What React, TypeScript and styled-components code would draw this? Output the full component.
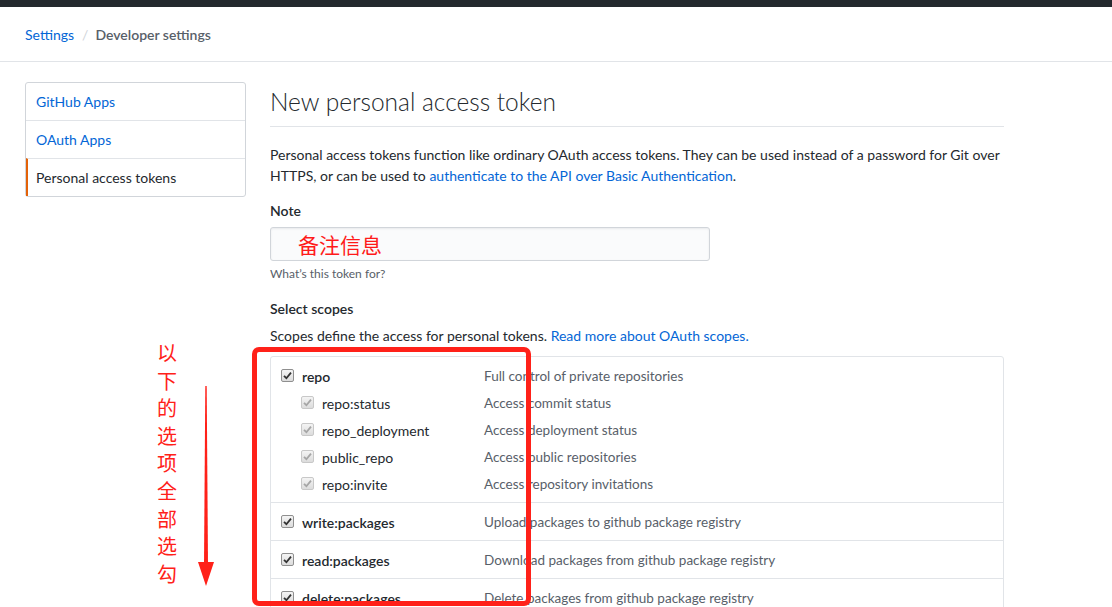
import React from "react";
import styled, { createGlobalStyle } from "styled-components";

const Global = createGlobalStyle`
  html, body { margin: 0; padding: 0; background: #fff; }
  body {
    font-family: "Segoe UI", Lato, "Noto Sans", "Noto Sans CJK SC", sans-serif;
    font-size: 14px;
    line-height: 1.5;
    color: #24292e;
  }
  * { box-sizing: border-box; }
`;

const Page = styled.div`
  position: relative;
  width: 1112px;
  height: 607px;
  overflow: hidden;
`;

const TopBar = styled.div`
  height: 7px;
  background: #24292e;
`;

const Breadcrumb = styled.div`
  height: 55px;
  display: flex;
  align-items: center;
  padding: 0 25px;
  border-bottom: 1px solid #e1e4e8;
  font-size: 14px;
`;

const Crumb = styled.a`
  color: #0366d6;
  text-decoration: none;
`;

const Sep = styled.span`
  color: #d1d5da;
  margin: 0 7px 0 8px;
`;

const Current = styled.span`
  font-weight: 600;
  color: #586069;
`;

const Layout = styled.div`
  display: flex;
  gap: 24px;
  padding: 20px 0 0 25px;
`;

const SideNav = styled.nav`
  width: 221px;
  flex: none;
  border: 1px solid #d1d5da;
  border-radius: 3px;
  align-self: flex-start;
`;

const NavItem = styled.a<{ $active?: boolean; $first?: boolean }>`
  display: block;
  height: ${(p) => (p.$first ? 37 : 38)}px;
  line-height: 37px;
  padding-left: ${(p) => (p.$active ? 8 : 10)}px;
  border-top: ${(p) => (p.$first ? "none" : "1px solid #e1e4e8")};
  border-left: ${(p) => (p.$active ? "2px solid #e36209" : "none")};
  color: ${(p) => (p.$active ? "#24292e" : "#0366d6")};
  text-decoration: none;
  font-size: 14px;
`;

const Main = styled.main`
  width: 734px;
  flex: none;
`;

const Title = styled.h2`
  margin: 0;
  font-size: 24.5px;
  font-weight: 300;
  line-height: 36px;
  padding: 2px 0 6px;
  border-bottom: 1px solid #e1e4e8;
  color: #24292e;
`;

const Lead = styled.p`
  margin: 17px 0 0;
  line-height: 21px;
`;

const Link = styled.a`
  color: #0366d6;
  text-decoration: none;
`;

const Label = styled.div<{ $mt: number }>`
  margin-top: ${(p) => p.$mt}px;
  font-weight: 600;
  line-height: 21px;
`;

const NoteInput = styled.input`
  display: block;
  margin-top: 6px;
  width: 440px;
  height: 34px;
  padding: 0 0 0 27px;
  border: 1px solid #d1d5da;
  border-radius: 3px;
  background: #fafbfc;
  color: #ff1a1a;
  font-family: "Noto Sans CJK SC", sans-serif;
  font-size: 21px;
  outline: none;
  box-shadow: inset 0 1px 2px rgba(27, 31, 35, 0.075);
`;

const Hint = styled.div`
  margin-top: 4px;
  font-size: 12px;
  line-height: 18px;
  color: #586069;
`;

const Desc = styled.p`
  margin: 6px 0 0;
  line-height: 21px;
`;

const ScopeBox = styled.div`
  margin-top: 10px;
  border: 1px solid #e1e4e8;
  border-radius: 3px;
`;

const ScopeGroup = styled.div`
  padding: 9px 0 7px;
  & + & { border-top: 1px solid #e1e4e8; }
`;

const ScopeRow = styled.div<{ $sub?: boolean }>`
  display: grid;
  grid-template-columns: 213px 1fr;
  line-height: 21px;
  margin-top: ${(p) => (p.$sub ? 6 : 0)}px;
`;

const ScopeName = styled.label<{ $sub?: boolean }>`
  display: flex;
  align-items: center;
  gap: 8px;
  padding-left: ${(p) => (p.$sub ? 30 : 10)}px;
  font-weight: ${(p) => (p.$sub ? 400 : 600)};
  color: #24292e;
`;

const ScopeDesc = styled.span`
  color: #586069;
  font-size: 13.5px;
`;

const Box = styled.span<{ $dim?: boolean }>`
  width: 13px;
  height: 13px;
  flex: none;
  display: inline-flex;
  align-items: center;
  justify-content: center;
  border: 1px solid ${(p) => (p.$dim ? "#c8c8c8" : "#8f8f8f")};
  border-radius: 2px;
  background: linear-gradient(#f4f4f4, #dcdcdc);
  margin-top: -2px;
`;

const RedFrame = styled.div`
  position: absolute;
  left: 252px;
  top: 347px;
  width: 279px;
  height: 259px;
  border: 5px solid #ff2119;
  border-radius: 7px;
  pointer-events: none;
`;

const Annotation = styled.div`
  position: absolute;
  left: 157px;
  top: 339px;
  display: flex;
  flex-direction: column;
  font-family: "Noto Sans CJK SC", sans-serif;
  font-size: 20px;
  line-height: 27.6px;
  color: #ff2119;
`;

const ArrowSvg = styled.svg`
  position: absolute;
  left: 196px;
  top: 386px;
`;

function Check({ dim }: { dim?: boolean }) {
  return (
    <Box $dim={dim}>
      <svg width="9" height="9" viewBox="0 0 9 9">
        <path
          d="M1 4.8 L3.4 7.2 L8 1.6"
          fill="none"
          stroke={dim ? "#a6a6a6" : "#333"}
          strokeWidth="1.8"
        />
      </svg>
    </Box>
  );
}

type Scope = { name: string; desc: string; subs?: { name: string; desc: string }[] };

const scopes: Scope[] = [
  {
    name: "repo",
    desc: "Full control of private repositories",
    subs: [
      { name: "repo:status", desc: "Access commit status" },
      { name: "repo_deployment", desc: "Access deployment status" },
      { name: "public_repo", desc: "Access public repositories" },
      { name: "repo:invite", desc: "Access repository invitations" },
    ],
  },
  { name: "write:packages", desc: "Upload packages to github package registry" },
  { name: "read:packages", desc: "Download packages from github package registry" },
  { name: "delete:packages", desc: "Delete packages from github package registry" },
];

export default function App() {
  return (
    <Page>
      <Global />
      <TopBar />
      <Breadcrumb>
        <Crumb href="#">Settings</Crumb>
        <Sep>/</Sep>
        <Current>Developer settings</Current>
      </Breadcrumb>
      <Layout>
        <SideNav>
          <NavItem href="#" $first>GitHub Apps</NavItem>
          <NavItem href="#">OAuth Apps</NavItem>
          <NavItem href="#" $active>Personal access tokens</NavItem>
        </SideNav>
        <Main>
          <Title>New personal access token</Title>
          <Lead>
            Personal access tokens function like ordinary OAuth access tokens. They can be used instead of a
            password for Git over HTTPS, or can be used to{" "}
            <Link href="#">authenticate to the API over Basic Authentication</Link>.
          </Lead>
          <Label $mt={14}>Note</Label>
          <NoteInput defaultValue="备注信息" />
          <Hint>What’s this token for?</Hint>
          <Label $mt={15}>Select scopes</Label>
          <Desc>
            Scopes define the access for personal tokens. <Link href="#">Read more about OAuth scopes.</Link>
          </Desc>
          <ScopeBox>
            {scopes.map((s) => (
              <ScopeGroup key={s.name}>
                <ScopeRow>
                  <ScopeName>
                    <Check />
                    {s.name}
                  </ScopeName>
                  <ScopeDesc>{s.desc}</ScopeDesc>
                </ScopeRow>
                {s.subs?.map((c) => (
                  <ScopeRow $sub key={c.name}>
                    <ScopeName $sub>
                      <Check dim />
                      {c.name}
                    </ScopeName>
                    <ScopeDesc>{c.desc}</ScopeDesc>
                  </ScopeRow>
                ))}
              </ScopeGroup>
            ))}
          </ScopeBox>
        </Main>
      </Layout>
      <RedFrame />
      <Annotation>
        {"以下的选项全部选勾".split("").map((c, i) => (
          <span key={i}>{c}</span>
        ))}
      </Annotation>
      <ArrowSvg width="20" height="202" viewBox="0 0 20 202">
        <polygon points="9.3,0 10.7,0 12,178 8,178" fill="#ff2119" />
        <polygon points="2,176 18,176 10,200" fill="#ff2119" />
      </ArrowSvg>
    </Page>
  );
}
